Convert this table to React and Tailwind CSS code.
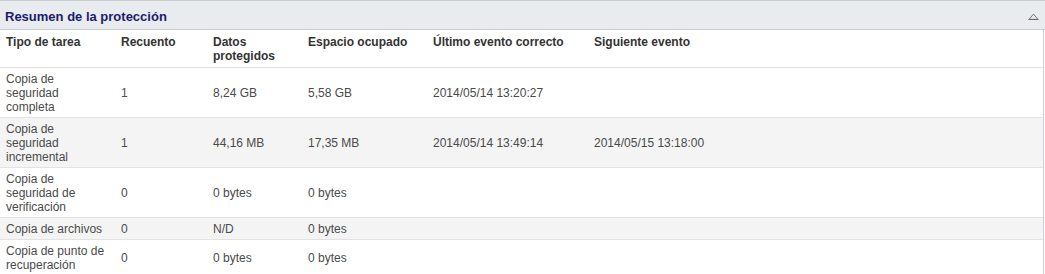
const columns = ["Tipo de tarea", "Recuento", "Datos protegidos", "Espacio ocupado", "Último evento correcto", "Siguiente evento"];

const rows = [
  ["Copia de seguridad completa", "1", "8,24 GB", "5,58 GB", "2014/05/14 13:20:27", ""],
  ["Copia de seguridad incremental", "1", "44,16 MB", "17,35 MB", "2014/05/14 13:49:14", "2014/05/15 13:18:00"],
  ["Copia de seguridad de verificación", "0", "0 bytes", "0 bytes", "", ""],
  ["Copia de archivos", "0", "N/D", "0 bytes", "", ""],
  ["Copia de punto de recuperación", "0", "0 bytes", "0 bytes", "", ""],
];

const widths = ["w-[115px]", "w-[92px]", "w-[95px]", "w-[125px]", "w-[161px]", ""];

export default function App() {
  return (
    <div className="w-[1045px] h-[274px] overflow-hidden bg-white font-['Liberation_Sans',Arial,sans-serif] text-[12px] leading-[14px]">
      <div className="flex h-[30px] items-center justify-between border-y border-[#c9ced6] bg-[#e9ecef] pl-[5px] pr-[6px]">
        <h2 className="mt-[4px] text-[13px] font-bold text-[#1b1b6e]">Resumen de la protección</h2>
        <svg width="11" height="7" viewBox="0 0 11 7" className="mt-[3px]">
          <path d="M1 6.5 L5.5 1 L10 6.5 Z" fill="none" stroke="#7a7a7a" strokeWidth="1" />
          <path d="M0.5 6.5 H10.5" stroke="#6a6a6a" strokeWidth="1.2" />
        </svg>
      </div>
      <div className="w-[1044px] border-r border-[#cdd2da]">
        <table className="w-full table-fixed border-collapse">
          <thead>
            <tr className="border-b border-[#e2e2e2]">
              {columns.map((c, i) => (
                <th key={c} className={`${widths[i]} px-[6px] pt-[5px] pb-[4px] text-left align-top font-bold text-[#333]`}>
                  {i === 2 ? (
                    <>
                      Datos
                      <br />
                      protegidos
                    </>
                  ) : (
                    c
                  )}
                </th>
              ))}
            </tr>
          </thead>
          <tbody>
            {rows.map((r, ri) => (
              <tr key={ri} className={`border-b border-[#e2e2e2] ${ri % 2 === 1 ? "bg-[#f4f4f4]" : "bg-white"}`}>
                {r.map((v, ci) => (
                  <td key={ci} className="px-[6px] pt-[4px] pb-[3px] align-middle text-[#4a4a4a]">
                    {v}
                  </td>
                ))}
              </tr>
            ))}
          </tbody>
        </table>
      </div>
    </div>
  );
}
